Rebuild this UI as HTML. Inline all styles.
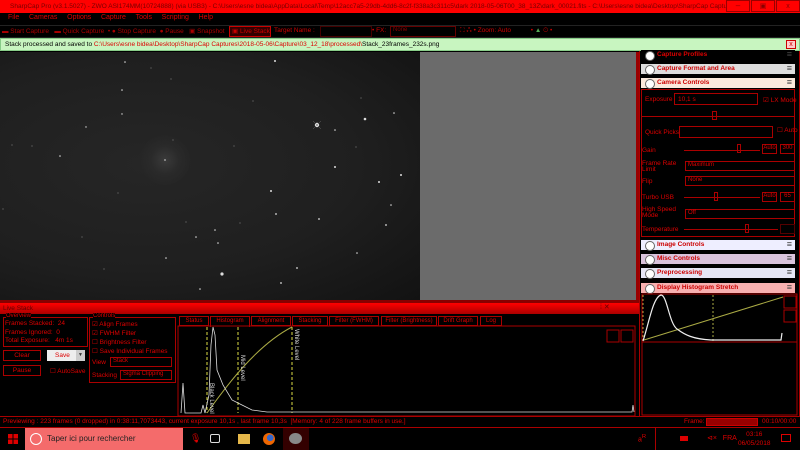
<!DOCTYPE html>
<html><head><meta charset="utf-8"><style>
*{margin:0;padding:0;box-sizing:border-box}
body{width:800px;height:450px;overflow:hidden;background:#000;font-family:"Liberation Sans",sans-serif;font-size:7px;color:#d00;position:relative}
.a{position:absolute;white-space:nowrap}
.bx{position:absolute;border:1px solid #a00}
.ph{position:absolute;left:641px;width:154px;height:10px;font-size:6.5px;color:#c00;font-weight:bold;padding-left:16px;line-height:10px}
.ph:before{content:"";position:absolute;left:4px;top:1px;width:8px;height:8px;border-radius:50%;background:#fff;border:1px solid #666}
.ph:after{content:"≡";position:absolute;right:3px;top:-1px;color:#444;font-size:9px}
.lbl{position:absolute;font-size:6.5px;color:#d00}
.tab{position:absolute;top:316px;height:10px;border:1px solid #a00;font-size:6px;color:#d00;text-align:center;line-height:9px}
</style></head><body>
<!-- title -->
<div class="a" style="left:0;top:0;width:800px;height:13px;background:#f00;color:#700;font-size:6.5px;line-height:13px;padding-left:10px">SharpCap Pro (v3.1.5027) - ZWO ASI174MM(10724888) (via USB3) - C:\Users\esne bidea\AppData\Local\Temp\12acc7a5-29db-4dd6-8c2f-f338a3c311c5\dark 2018-05-06T00_38_13Z\dark_00021.fits - C:\Users\esne bidea\Desktop\SharpCap Captures</div>
<div class="a" style="left:726px;top:0;width:24px;height:12px;border:1px solid #900;background:#f00;color:#800;text-align:center;font-size:8px;line-height:10px">–</div>
<div class="a" style="left:751px;top:0;width:24px;height:12px;border:1px solid #900;background:#f00;color:#800;text-align:center;font-size:7px;line-height:11px">▣</div>
<div class="a" style="left:776px;top:0;width:24px;height:12px;border:1px solid #900;background:#f00;color:#800;text-align:center;font-size:7px;line-height:11px">x</div>
<!-- menu -->
<div class="a" style="left:8px;top:14px;font-size:7px;color:#d00">File&nbsp;&nbsp;&nbsp;&nbsp;&nbsp;Cameras&nbsp;&nbsp;&nbsp;&nbsp;&nbsp;Options&nbsp;&nbsp;&nbsp;&nbsp;&nbsp;Capture&nbsp;&nbsp;&nbsp;&nbsp;&nbsp;Tools&nbsp;&nbsp;&nbsp;&nbsp;&nbsp;Scripting&nbsp;&nbsp;&nbsp;&nbsp;&nbsp;Help</div>
<!-- toolbar -->
<div class="a" style="left:0;top:25px;width:800px;height:13px;border-top:1px solid #222;border-bottom:1px solid #222"></div>
<div class="a" style="left:2px;top:27px;font-size:6.5px;color:#a00">▬ Start Capture&nbsp;&nbsp; ▬ Quick Capture&nbsp; • ● Stop Capture&nbsp; ● Pause&nbsp;&nbsp; ▣ Snapshot</div>
<div class="a" style="left:229px;top:26px;width:42px;height:11px;border:1px solid #c00;background:#300;color:#c00;font-size:6.5px;padding-left:2px;line-height:9px">▣ Live Stack</div>
<div class="a" style="left:274px;top:27px;font-size:6.5px;color:#c00">Target Name :</div>
<div class="a" style="left:320px;top:26px;width:52px;height:11px;border:1px solid #400"></div>
<div class="a" style="left:372px;top:27px;font-size:6.5px;color:#c00">• FX:</div>
<div class="a" style="left:390px;top:26px;width:66px;height:11px;border:1px solid #600;color:#800;font-size:6px;padding-left:2px">None</div>
<div class="a" style="left:460px;top:27px;font-size:6.5px;color:#c00">⛶ ⁂ • Zoom: Auto&nbsp;&nbsp;&nbsp;&nbsp;&nbsp;&nbsp;&nbsp;&nbsp;&nbsp;&nbsp;&nbsp;• <span style="color:#5a5">▲</span> ⊙ •</div>
<!-- notif -->
<div class="a" style="left:0;top:38px;width:800px;height:13px;background:#c8f5c0;border:1px solid #8c8;font-size:6.5px;color:#000;line-height:11px;padding-left:4px">Stack processed and saved to <span style="color:#d00">C:\Users\esne bidea\Desktop\SharpCap Captures\2018-05-06\Capture\03_12_18\processed\</span>Stack_23frames_232s.png</div>
<div class="a" style="left:786px;top:40px;width:10px;height:9px;border:1px solid #c00;background:#fcc;color:#c00;font-size:7px;text-align:center;line-height:7px">x</div>
<!-- image -->
<div class="a" style="left:0;top:52px;width:420px;height:249px;background:radial-gradient(ellipse at 35% 45%,#262626 0%,#1f1f1f 55%,#121212 100%)"></div>
<div class="a" style="left:140px;top:135px;width:50px;height:50px;border-radius:50%;background:radial-gradient(circle,#3a3a3a 0%,rgba(45,45,45,.6) 40%,transparent 75%)"></div>
<svg class="a" style="left:0;top:0" width="420" height="300">
<g fill="#ddd">
<circle cx="317" cy="125" r="2.2"/><circle cx="222" cy="274" r="1.6"/><circle cx="365" cy="119" r="1.3"/><circle cx="165" cy="160" r="1" fill="#999"/>
<circle cx="275" cy="61" r="1"/><circle cx="125" cy="62" r="0.8"/><circle cx="122" cy="90" r="0.8"/><circle cx="60" cy="156" r="0.8"/>
<circle cx="335" cy="167" r="1"/><circle cx="401" cy="175" r="1"/><circle cx="379" cy="182" r="1"/><circle cx="271" cy="191" r="1"/>
<circle cx="276" cy="214" r="0.9"/><circle cx="319" cy="219" r="0.9"/><circle cx="386" cy="225" r="0.9"/><circle cx="215" cy="230" r="0.8"/>
<circle cx="196" cy="237" r="0.8"/><circle cx="218" cy="243" r="0.8"/><circle cx="297" cy="268" r="0.9"/><circle cx="281" cy="283" r="0.9"/>
<circle cx="200" cy="289" r="0.8"/><circle cx="166" cy="258" r="0.8"/><circle cx="357" cy="253" r="0.8"/><circle cx="391" cy="205" r="0.8"/>
<circle cx="335" cy="130" r="0.8"/><circle cx="394" cy="113" r="0.8"/><circle cx="122" cy="114" r="0.7"/><circle cx="86" cy="127" r="0.7"/>
</g>
<g fill="#777"><circle cx="151" cy="68" r=".6"/><circle cx="171" cy="79" r=".6"/><circle cx="173" cy="140" r=".6"/><circle cx="234" cy="146" r=".6"/><circle cx="118" cy="193" r=".6"/><circle cx="82" cy="237" r=".6"/><circle cx="32" cy="146" r=".6"/><circle cx="12" cy="145" r=".6"/><circle cx="356" cy="147" r=".6"/><circle cx="253" cy="101" r=".6"/><circle cx="186" cy="222" r=".6"/><circle cx="104" cy="269" r=".6"/><circle cx="240" cy="223" r=".6"/><circle cx="361" cy="98" r=".6"/><circle cx="3" cy="209" r=".6"/></g>
<path d="M313 121L321 129M321 121L313 129" stroke="#666" stroke-width=".5"/>
</svg>
<div class="a" style="left:420px;top:52px;width:216px;height:249px;background:#6b6b6b"></div>
<div class="a" style="left:636px;top:52px;width:3px;height:250px;background:#900"></div>
<div class="a" style="left:0;top:300px;width:639px;height:3px;background:#800"></div>
<!-- right panel -->
<div class="a" style="left:639px;top:51px;width:161px;height:365px;background:#000;border-left:1px solid #a00;border-right:1px solid #a00"></div>
<div class="ph" style="top:50px;background:#000;color:#d00">Capture Profiles</div>
<div class="ph" style="top:64px;background:#ddd">Capture Format and Area</div>
<div class="ph" style="top:78px;background:#fbe9dc">Camera Controls</div>
<div class="bx" style="left:641px;top:89px;width:154px;height:148px"></div>
<div class="lbl" style="left:645px;top:96px">Exposure</div>
<div class="bx" style="left:674px;top:93px;width:84px;height:12px;color:#d00;font-size:6.5px;padding:2px 3px">10,1 s</div>
<div class="lbl" style="left:763px;top:96px">☑ LX Mode</div>
<div class="a" style="left:642px;top:116px;width:152px;height:1px;background:#a00"></div>
<div class="bx" style="left:712px;top:111px;width:5px;height:9px"></div>
<div class="lbl" style="left:645px;top:129px">Quick Picks</div>
<div class="bx" style="left:679px;top:126px;width:94px;height:12px"></div>
<div class="lbl" style="left:777px;top:126px">☐ Auto</div>
<div class="lbl" style="left:642px;top:147px">Gain</div>
<div class="a" style="left:684px;top:150px;width:76px;height:1px;background:#a00"></div>
<div class="bx" style="left:737px;top:144px;width:4px;height:9px"></div>
<div class="bx" style="left:762px;top:144px;width:15px;height:10px;font-size:6px;text-align:center">Auto</div>
<div class="bx" style="left:780px;top:144px;width:15px;height:10px;font-size:6px;text-align:center">300</div>
<div class="lbl" style="left:642px;top:161px;line-height:6px">Frame Rate<br>Limit</div>
<div class="bx" style="left:685px;top:161px;width:110px;height:10px;font-size:6px;padding-left:2px">Maximum</div>
<div class="lbl" style="left:642px;top:178px">Flip</div>
<div class="bx" style="left:685px;top:176px;width:110px;height:10px;font-size:6px;padding-left:2px">None</div>
<div class="lbl" style="left:642px;top:194px">Turbo USB</div>
<div class="a" style="left:684px;top:197px;width:76px;height:1px;background:#a00"></div>
<div class="bx" style="left:714px;top:192px;width:4px;height:9px"></div>
<div class="bx" style="left:762px;top:192px;width:15px;height:10px;font-size:6px;text-align:center">Auto</div>
<div class="bx" style="left:780px;top:192px;width:15px;height:10px;font-size:6px;text-align:center">65</div>
<div class="lbl" style="left:642px;top:207px;line-height:6px">High Speed<br>Mode</div>
<div class="bx" style="left:685px;top:209px;width:110px;height:10px;font-size:6px;padding-left:2px">Off</div>
<div class="lbl" style="left:642px;top:226px">Temperature</div>
<div class="a" style="left:684px;top:229px;width:94px;height:1px;background:#a00"></div>
<div class="bx" style="left:745px;top:224px;width:4px;height:9px"></div>
<div class="bx" style="left:780px;top:224px;width:15px;height:10px;border-color:#500"></div>
<div class="ph" style="top:240px;background:#eef">Image Controls</div>
<div class="ph" style="top:254px;background:#d9c3dc">Misc Controls</div>
<div class="ph" style="top:268px;background:#e6e6f5">Preprocessing</div>
<div class="ph" style="top:283px;background:#f7b0b0">Display Histogram Stretch</div>
<svg class="a" style="left:641px;top:293px" width="158" height="123">
<rect x="1" y="1" width="155" height="121" fill="none" stroke="#a00"/>
<line x1="1" y1="49" x2="156" y2="49" stroke="#a00"/>
<line x1="2" y1="2" x2="2" y2="48" stroke="#aa4" stroke-dasharray="2,2"/>
<line x1="72" y1="2" x2="72" y2="48" stroke="#aa4" stroke-dasharray="2,2"/>
<line x1="3" y1="47" x2="142" y2="4" stroke="#aa4"/>
<path d="M2 48C8 30 12 4 20 2C26 2 28 30 36 36C44 42 52 46 70 47L140 47L141 40" fill="none" stroke="#eee" stroke-width="1.2"/>
<rect x="143" y="3" width="12" height="12" fill="none" stroke="#a00"/><rect x="143" y="17" width="12" height="12" fill="none" stroke="#a00"/>
</svg>
<!-- live stack -->
<div class="a" style="left:0;top:303px;width:639px;height:11px;background:linear-gradient(#f00,#a00);font-size:6.5px;color:#600;padding-left:3px;line-height:11px">Live Stack</div>
<div class="a" style="left:600px;top:303px;font-size:7px;color:#600">⁞ ✕</div>
<div class="bx" style="left:3px;top:317px;width:85px;height:30px"></div>
<div class="a" style="left:6px;top:313px;font-size:6px;background:#000;color:#d00">Overview</div>
<div class="lbl" style="left:5px;top:320px;line-height:8.5px">Frames Stacked:&nbsp; 24<br>Frames Ignored:&nbsp; 0<br>Total Exposure:&nbsp;&nbsp; 4m 1s</div>
<div class="bx" style="left:3px;top:350px;width:38px;height:11px;font-size:6.5px;text-align:center;line-height:9px">Clear</div>
<div class="a" style="left:47px;top:350px;width:38px;height:11px;background:#eee;color:#d00;font-size:6.5px;padding-left:8px;line-height:11px">Save<span style="position:absolute;right:0;top:0;width:9px;height:11px;background:#ccc;color:#333;font-size:5px;text-align:center">▼</span></div>
<div class="bx" style="left:3px;top:365px;width:38px;height:11px;font-size:6.5px;text-align:center;line-height:9px">Pause</div>
<div class="lbl" style="left:50px;top:367px">☐ AutoSave</div>
<div class="bx" style="left:89px;top:317px;width:87px;height:66px"></div>
<div class="a" style="left:93px;top:313px;font-size:6px;background:#000;color:#d00">Controls</div>
<div class="lbl" style="left:92px;top:320px;line-height:9px">☑ Align Frames<br>☑ FWHM Filter<br>☐ Brightness Filter<br>☐ Save Individual Frames</div>
<div class="lbl" style="left:92px;top:359px">View</div>
<div class="bx" style="left:110px;top:357px;width:62px;height:10px;font-size:6px;padding-left:2px">Stack</div>
<div class="lbl" style="left:92px;top:372px">Stacking</div>
<div class="bx" style="left:120px;top:370px;width:52px;height:10px;font-size:6px;padding-left:2px">Sigma Clipping</div>
<div class="tab" style="left:179px;width:30px">Status</div>
<div class="tab" style="left:210px;width:40px;border-bottom:none;height:11px">Histogram</div>
<div class="tab" style="left:251px;width:40px">Alignment</div>
<div class="tab" style="left:292px;width:36px">Stacking</div>
<div class="tab" style="left:329px;width:50px">Filter (FWHM)</div>
<div class="tab" style="left:381px;width:56px">Filter (Brightness)</div>
<div class="tab" style="left:438px;width:40px">Drift Graph</div>
<div class="tab" style="left:480px;width:22px">Log</div>
<svg class="a" style="left:177px;top:325px" width="460" height="92">
<rect x="1" y="1" width="457" height="90" fill="none" stroke="#a00"/>
<line x1="30" y1="2" x2="30" y2="88" stroke="#dd4" stroke-dasharray="3,2"/>
<line x1="61" y1="2" x2="61" y2="88" stroke="#dd4" stroke-dasharray="3,2"/>
<line x1="115" y1="2" x2="115" y2="88" stroke="#dd4" stroke-dasharray="3,2"/>
<path d="M30 88C50 60 80 20 115 2" fill="none" stroke="#aa4"/>
<path d="M4 88L6 58L8 88L24 88L26 80L28 88L32 70L34 20L36 2L38 10L40 45L46 60L55 75L65 80L75 85L90 87L455 87L456 80L457 87" fill="none" stroke="#ddd" stroke-width=".8"/>
<text x="0" y="0" font-size="6" fill="#ddd" transform="translate(33,58) rotate(90)">Black Level</text>
<text x="0" y="0" font-size="6" fill="#ddd" transform="translate(64,30) rotate(90)">Mid Level</text>
<text x="0" y="0" font-size="6" fill="#ddd" transform="translate(118,4) rotate(90)">White Level</text>
<rect x="430" y="5" width="12" height="12" fill="none" stroke="#a00"/><rect x="444" y="5" width="12" height="12" fill="none" stroke="#a00"/>
</svg>
<!-- status -->
<div class="a" style="left:0;top:416px;width:800px;height:12px;border-top:1px solid #a00;border-bottom:1px solid #a00;font-size:6.5px;color:#d00;padding-left:3px;line-height:10px">Previewing : 223 frames (0 dropped) in 0:38:11,7073443, current exposure 10,1s , last frame 10,3s&nbsp; [Memory: 4 of 228 frame buffers in use.]</div>
<div class="a" style="left:684px;top:418px;font-size:6.5px">Frame:</div>
<div class="a" style="left:706px;top:418px;width:52px;height:8px;background:#900;border:1px solid #c00"></div>
<div class="a" style="left:762px;top:418px;font-size:6.5px">00:10/00:00</div>
<!-- taskbar -->
<div class="a" style="left:0;top:428px;width:800px;height:22px;background:#000"></div>
<svg class="a" style="left:8px;top:434px" width="10" height="10"><rect x="0" y="0" width="4.5" height="4.5" fill="#d00"/><rect x="5.5" y="0" width="4.5" height="4.5" fill="#d00"/><rect x="0" y="5.5" width="4.5" height="4.5" fill="#d00"/><rect x="5.5" y="5.5" width="4.5" height="4.5" fill="#d00"/></svg>
<div class="a" style="left:25px;top:428px;width:158px;height:22px;background:#f46b6b;font-size:8px;color:#222;line-height:22px;padding-left:22px">Taper ici pour rechercher</div>
<div class="a" style="left:30px;top:433px;width:12px;height:12px;border:1.5px solid #fff;border-radius:50%"></div>
<div class="a" style="left:190px;top:433px;font-size:9px;color:#d00">🎙</div>
<div class="a" style="left:210px;top:434px;width:10px;height:9px;border:1px solid #ddd;border-radius:2px"></div>
<div class="a" style="left:238px;top:434px;width:12px;height:10px;background:#e6b84a"></div>
<div class="a" style="left:263px;top:433px;width:12px;height:12px;border-radius:50%;background:radial-gradient(circle at 60% 40%,#36c 30%,#e60 35%)"></div>
<div class="a" style="left:283px;top:428px;width:26px;height:22px;background:#300"></div>
<div class="a" style="left:289px;top:433px;width:13px;height:11px;border-radius:50%;background:#888"></div>
<div class="a" style="left:638px;top:434px;font-size:7px;color:#d00">a<sup>R</sup></div>
<div class="a" style="left:655px;top:428px;width:145px;height:22px;border-left:1px solid #a00"></div>
<div class="a" style="left:680px;top:436px;width:8px;height:5px;background:#d00"></div>
<div class="a" style="left:707px;top:434px;font-size:7px;color:#d00">⊲×&nbsp;&nbsp; FRA</div>
<div class="a" style="left:738px;top:430px;font-size:6.5px;color:#d00;text-align:center;line-height:9px">03:16<br>06/05/2018</div>
<div class="a" style="left:781px;top:434px;width:10px;height:8px;border:1px solid #d00"></div>
</body></html>
